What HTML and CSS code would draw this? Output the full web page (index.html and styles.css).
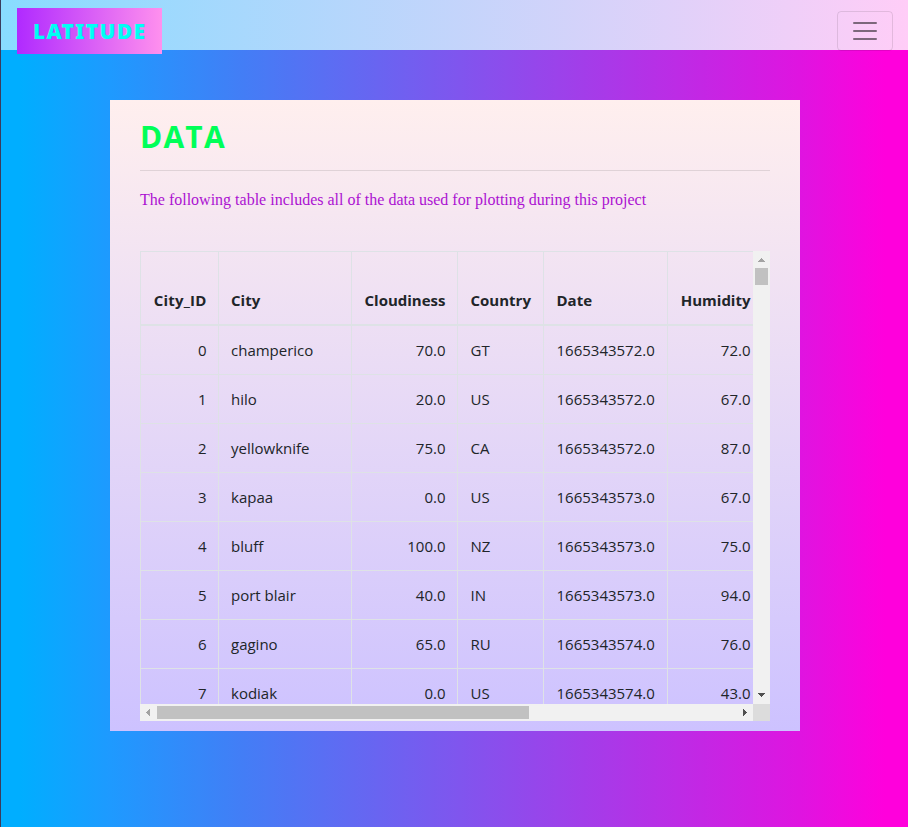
FILE: index.html
```html
<!DOCTYPE html>
<html lang="en">
<head>
<meta charset="utf-8">
<title>Latitude</title>
<link rel="stylesheet" href="styles.css">
</head>
<body>
<nav class="navbar">
  <a class="brand">LATITUDE</a>
  <button class="toggler" aria-label="Toggle navigation">
    <svg width="30" height="30" viewBox="0 0 30 30"><path d="M4 7h22M4 15h22M4 23h22" stroke="rgba(0,0,0,.5)" stroke-width="2" stroke-linecap="round" stroke-miterlimit="10"/></svg>
  </button>
</nav>
<main class="card">
  <h1>DATA</h1>
  <hr>
  <p class="intro">The following table includes all of the data used for plotting during this project</p>
  <div class="scroller">
    <div class="viewport">
      <table>
        <colgroup><col class="c-id"><col class="c-city"><col class="c-cloud"><col class="c-country"><col class="c-date"><col class="c-hum"></colgroup>
        <thead><tr><th class="num">City_ID</th><th>City</th><th class="num">Cloudiness</th><th>Country</th><th>Date</th><th class="num">Humidity</th></tr></thead>
        <tbody>
          <tr><td class="num">0</td><td>champerico</td><td class="num">70.0</td><td>GT</td><td>1665343572.0</td><td class="num">72.0</td></tr>
          <tr><td class="num">1</td><td>hilo</td><td class="num">20.0</td><td>US</td><td>1665343572.0</td><td class="num">67.0</td></tr>
          <tr><td class="num">2</td><td>yellowknife</td><td class="num">75.0</td><td>CA</td><td>1665343572.0</td><td class="num">87.0</td></tr>
          <tr><td class="num">3</td><td>kapaa</td><td class="num">0.0</td><td>US</td><td>1665343573.0</td><td class="num">67.0</td></tr>
          <tr><td class="num">4</td><td>bluff</td><td class="num">100.0</td><td>NZ</td><td>1665343573.0</td><td class="num">75.0</td></tr>
          <tr><td class="num">5</td><td>port blair</td><td class="num">40.0</td><td>IN</td><td>1665343573.0</td><td class="num">94.0</td></tr>
          <tr><td class="num">6</td><td>gagino</td><td class="num">65.0</td><td>RU</td><td>1665343574.0</td><td class="num">76.0</td></tr>
          <tr><td class="num">7</td><td>kodiak</td><td class="num">0.0</td><td>US</td><td>1665343574.0</td><td class="num">43.0</td></tr>
        </tbody>
      </table>
    </div>
    <div class="bar vertical">
      <svg width="17" height="17" shape-rendering="crispEdges"><path d="M5 11h7v-1h-1v-1h-1v-1h-1v-1h-1v1h-1v1h-1v1h-1z" fill="#a3a3a3"/></svg>
      <div class="thumb"></div>
      <svg class="end" width="17" height="17" shape-rendering="crispEdges"><path d="M5 6h7v1h-1v1h-1v1h-1v1h-1v-1h-1v-1h-1v-1h-1z" fill="#505050"/></svg>
    </div>
    <div class="bar horizontal">
      <svg width="17" height="17" shape-rendering="crispEdges"><path d="M10 5v7h-1v-1h-1v-1h-1v-1h-1v-1h1v-1h1v-1h1v-1z" fill="#a3a3a3"/></svg>
      <div class="thumb"></div>
      <svg class="end" width="17" height="17" shape-rendering="crispEdges"><path d="M7 5v7h1v-1h1v-1h1v-1h1v-1h-1v-1h-1v-1h-1v-1z" fill="#505050"/></svg>
    </div>
    <div class="corner"></div>
  </div>
</main>
</body>
</html>
```
FILE: styles.css
```css
* { box-sizing: border-box; }
body {
  margin: 0;
  height: 827px;
  overflow: hidden;
  border-left: 1px solid #3a3c5c;
  background: linear-gradient(to right, #00aeff 0, #00aeff 20px, #1e9aff 110px, #427ef6 240px, #8055ee 460px, #df14e0 800px, #ff00dc 885px);
  color: #212529;
  font: 15px/24px "Open Sans", sans-serif;
}
.navbar {
  height: 50px;
  padding: 8px 15px 0 16px;
  display: flex;
  justify-content: space-between;
  align-items: flex-start;
  background: linear-gradient(to right, #88dcff, #ffcdf7);
}
.brand {
  width: 145px;
  height: 46px;
  padding-left: 16px;
  background: linear-gradient(to right, #b02aff, #ff90ee);
  color: #00fff4;
  font: 900 21px/47px "Noto Sans", sans-serif;
  letter-spacing: 1.3px;
  white-space: nowrap;
}
.toggler {
  width: 56px;
  height: 40px;
  margin-top: 3px;
  padding: 4px 12px;
  border: 1px solid rgba(0,0,0,.1);
  border-radius: 4px;
  background: none;
}
.toggler svg { display: block; }
.card {
  width: 690px;
  height: 631px;
  margin: 50px 0 0 109px;
  padding: 18px 30px 10px;
  background: linear-gradient(#ffefee, #cdc2ff);
}
h1 {
  height: 38px;
  margin: 0;
  color: #00ff58;
  font: 700 30px/37px "Open Sans", sans-serif;
  letter-spacing: 1.2px;
}
hr {
  height: 1px;
  margin: 14px 0 16px;
  border: 0;
  background: rgba(0,0,0,.1);
}
.intro {
  height: 24px;
  margin: 0 0 40px;
  color: #ac12d2;
  font: 16px/25px "Liberation Serif", serif;
  white-space: nowrap;
}
.scroller {
  display: grid;
  grid-template: 453px 17px / 613px 17px;
}
.viewport { overflow: hidden; }
table {
  width: 614px;
  table-layout: fixed;
  border-collapse: separate;
  border-spacing: 0;
}
.c-id { width: 78px; }
.c-city { width: 133px; }
.c-cloud { width: 106px; }
.c-country { width: 86px; }
.c-date { width: 124px; }
.c-hum { width: 87px; }
th, td {
  height: 49px;
  padding: 0 11.5px 0 12px;
  border: 0 solid #dee2e6;
  border-width: 0 0 1px 1px;
  text-align: left;
  white-space: nowrap;
}
th {
  height: 75px;
  padding-bottom: 12px;
  border-width: 1px 0 2px 1px;
  vertical-align: bottom;
}
th:first-child { letter-spacing: .2px; }
td:nth-child(n+4), th:nth-child(n+4) { padding-left: 12.5px; }
.num { text-align: right; }
th:last-child, td:last-child { padding-right: 3.5px; }
.bar { display: flex; background: #f1f1f1; }
.vertical { flex-direction: column; }
.bar svg { flex: none; }
.end { margin-top: auto; }
.horizontal .end { margin: 0 0 0 auto; }
.thumb { background: #c1c1c1; }
.vertical .thumb { height: 17px; margin: 0 2px; }
.horizontal .thumb { width: 372px; margin: 2px 0; }
.corner { background: #dcdcdc; }
```
